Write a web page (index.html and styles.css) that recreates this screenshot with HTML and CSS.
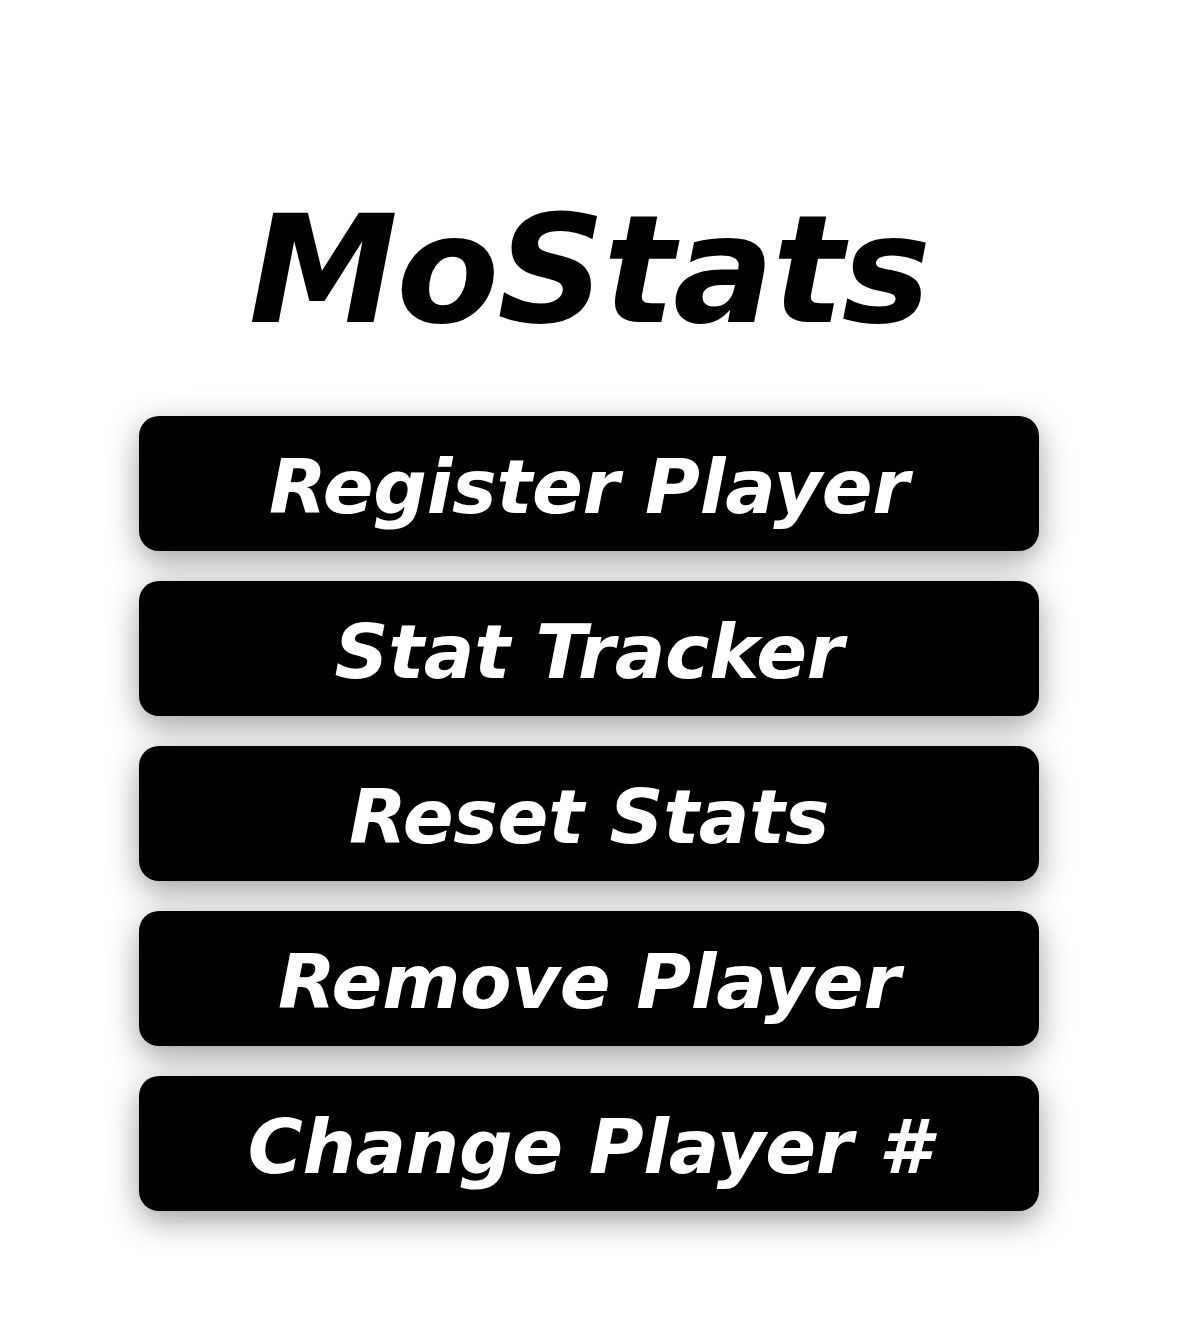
FILE: index.html
```html
<!DOCTYPE html>
<html>
<head>
<meta charset="utf-8">
<link rel="stylesheet" href="styles.css">
<title>MoStats</title>
</head>
<body>
<main class="page">
  <h1 class="title">MoStats</h1>
  <nav class="menu">
    <button class="menu-btn">Register Player</button>
    <button class="menu-btn">Stat Tracker</button>
    <button class="menu-btn">Reset Stats</button>
    <button class="menu-btn">Remove Player</button>
    <button class="menu-btn">Change Player #</button>
  </nav>
</main>
</body>
</html>
```
FILE: styles.css
```css
html, body {
  margin: 0;
  padding: 0;
  background: #fff;
}
.page {
  font-family: "DejaVu Sans", sans-serif;
  display: flex;
  flex-direction: column;
  align-items: center;
  padding: 180px 16px 111px 0;
}
.title {
  margin: 0;
  font-size: 150px;
  font-weight: bold;
  font-style: italic;
  letter-spacing: -2px;
  line-height: 180px;
  color: #000;
}
.menu {
  margin-top: 56px;
  display: flex;
  flex-direction: column;
  gap: 30px;
}
.menu-btn {
  width: 900px;
  height: 135px;
  border: none;
  border-radius: 20px;
  background: #000;
  color: #fff;
  font-family: "DejaVu Sans", sans-serif;
  font-size: 75px;
  font-weight: bold;
  font-style: italic;
  letter-spacing: -0.3px;
  box-shadow: 0 10px 32px rgba(0,0,0,0.38);
  padding: 6px 0 0;
}
```
